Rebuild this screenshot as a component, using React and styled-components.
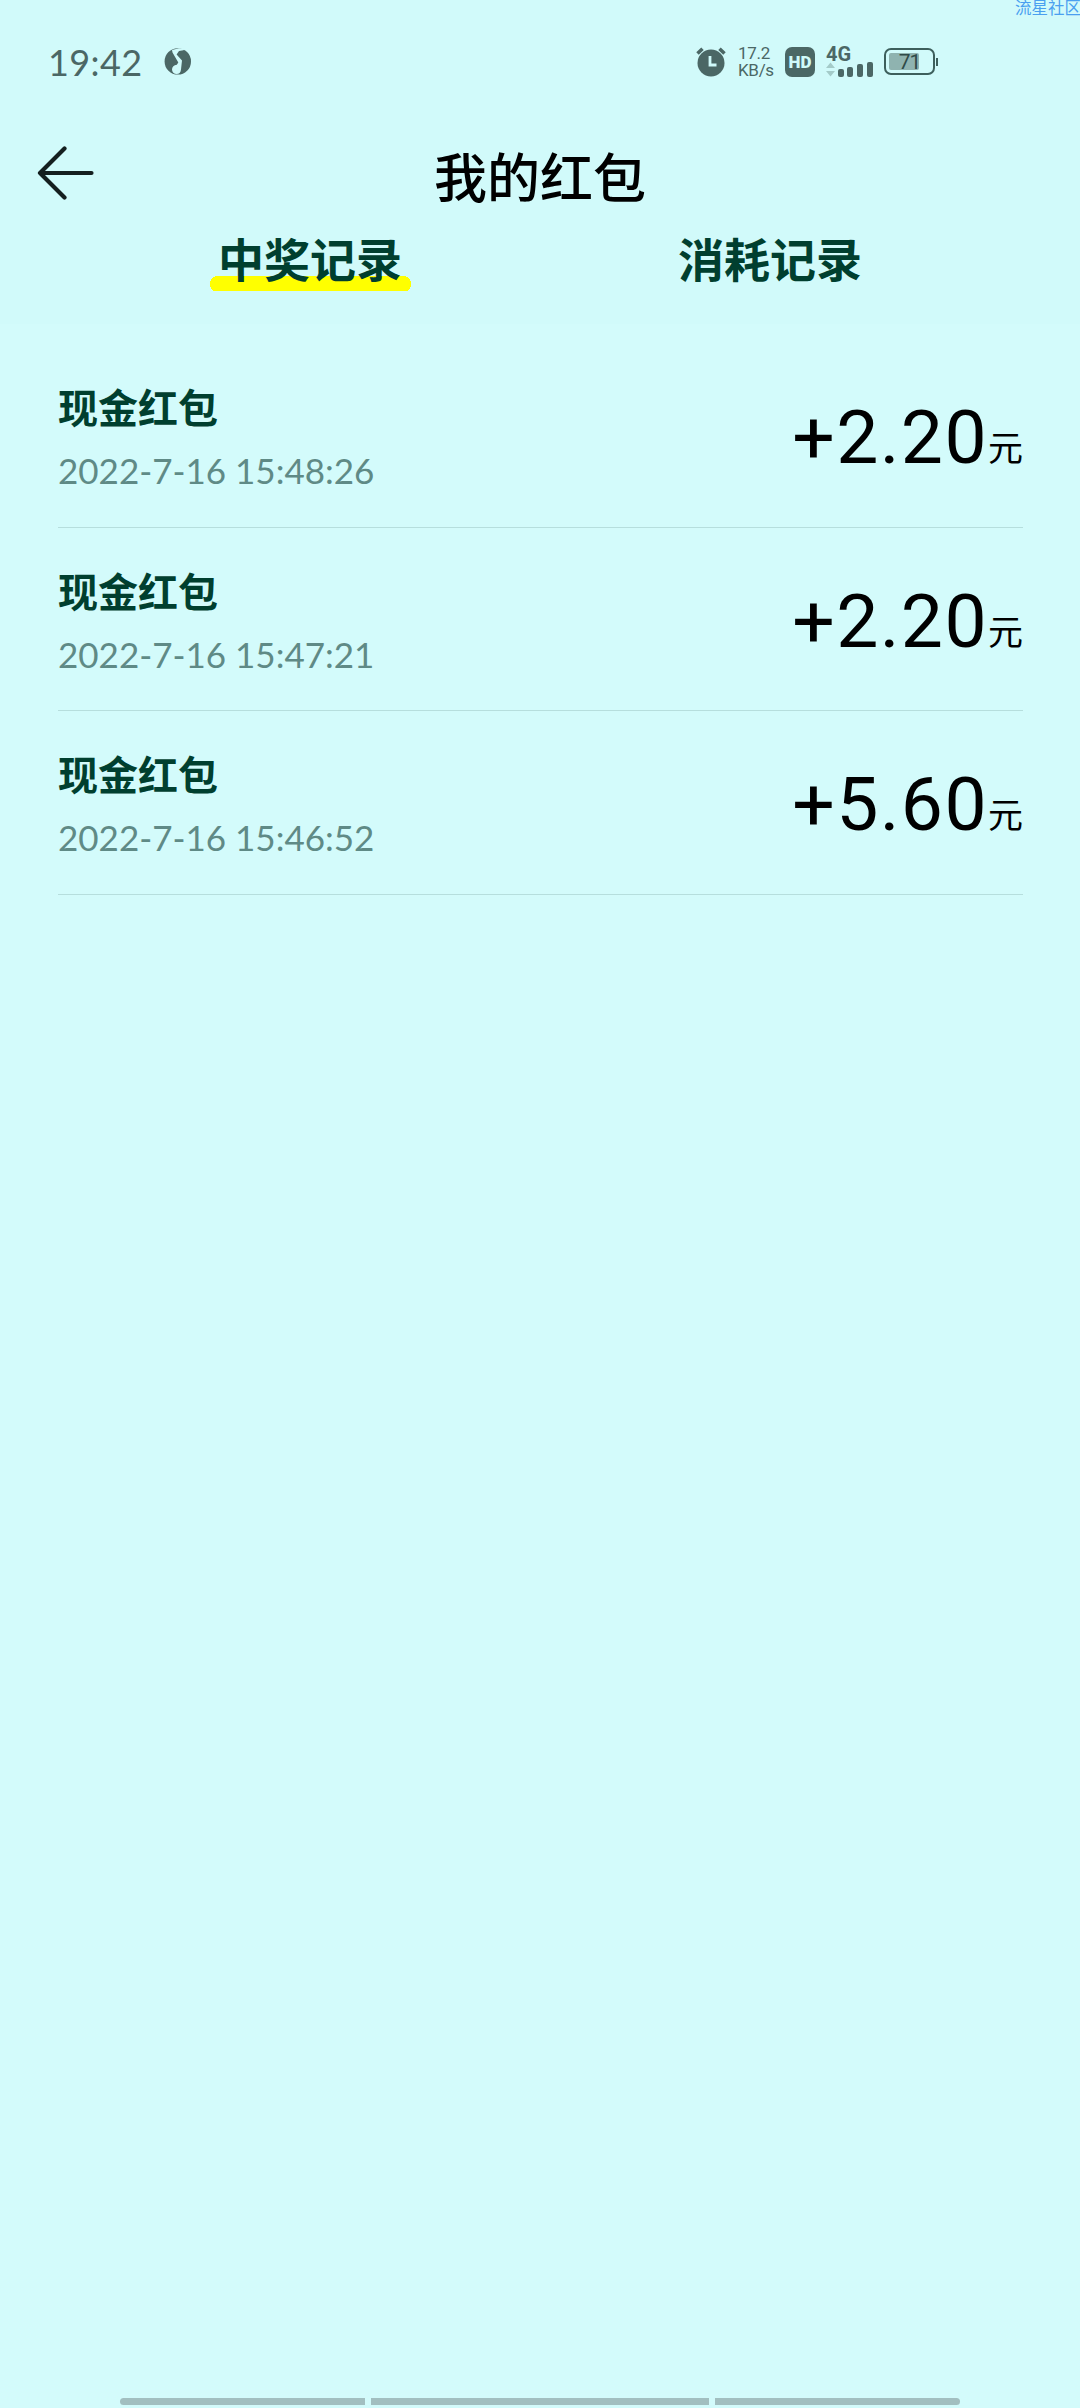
import styled, { createGlobalStyle } from 'styled-components';

const GlobalStyle = createGlobalStyle`
  * {
    box-sizing: border-box;
  }

  body {
    margin: 0;
    background: #d3fbfb;
    font-family: Lato, 'Noto Sans CJK SC', sans-serif;
  }
`;

const Screen = styled.div`
  position: relative;
  display: flex;
  flex-direction: column;
  width: 1080px;
  height: 2408px;
  overflow: hidden;
  background: #d3fbfb;
`;

const Watermark = styled.span`
  position: absolute;
  top: -3px;
  left: 1015px;
  color: #4a9ff0;
  font-size: 16.5px;
  line-height: 22px;
  white-space: nowrap;
`;

const Header = styled.header`
  height: 324px;
  background: #d1fafa;
`;

const StatusBar = styled.div`
  display: flex;
  align-items: center;
  justify-content: space-between;
  height: 123px;
  padding: 0 142px 0 48px;
  color: #4b6765;
`;

const StatusGroup = styled.div`
  display: flex;
  align-items: center;
`;

const Clock = styled.span`
  width: 116px;
  font-size: 36px;
  line-height: 44px;
  letter-spacing: 0.4px;
`;

const Speed = styled.div`
  display: flex;
  flex-direction: column;
  width: 47px;
  margin-left: 12px;
  font-family: Roboto, sans-serif;
  font-size: 17px;
  line-height: 17px;
  letter-spacing: -0.3px;
`;

const HdBadge = styled.span`
  display: flex;
  align-items: center;
  justify-content: center;
  width: 30px;
  height: 30px;
  border-radius: 7px;
  background: #4b6765;
  color: #d0fafa;
  font-family: Roboto, sans-serif;
  font-size: 17px;
  font-weight: 900;
`;

const Network = styled.div`
  display: flex;
  flex-direction: column;
  width: 48px;
  height: 30px;
  margin-left: 11px;
`;

const NetworkType = styled.span`
  font-family: Roboto, sans-serif;
  font-size: 20px;
  font-weight: 700;
  line-height: 15px;
`;

const Battery = styled.div`
  display: flex;
  align-items: center;
  margin-left: 10px;
`;

const BatteryBody = styled.div`
  width: 51px;
  height: 27px;
  padding: 3px;
  border: 2px solid #3d5f5c;
  border-radius: 7px;
`;

const BatteryLevel = styled.div`
  display: flex;
  align-items: center;
  justify-content: center;
  width: 30px;
  height: 17px;
  padding-left: 11px;
  border-radius: 2px;
  background: #8fb3b0;
  color: #2f4a48;
  font-family: Roboto, sans-serif;
  font-size: 21px;
  letter-spacing: -1px;
`;

const BatteryTip = styled.div`
  width: 2px;
  height: 8px;
  margin-left: 1px;
  background: #3d5f5c;
`;

const TitleBar = styled.div`
  display: grid;
  grid-template-columns: 120px 1fr 120px;
  align-items: center;
  height: 103px;
`;

const BackButton = styled.button`
  display: flex;
  width: 120px;
  padding: 0 0 3px 36px;
  border: 0;
  background: none;
`;

const Title = styled.h1`
  margin: 0;
  padding-top: 6px;
  color: #000;
  font-size: 53px;
  font-weight: 500;
  line-height: 76px;
  text-align: center;
`;

const Tabs = styled.nav`
  display: grid;
  grid-template-columns: 460px 460px;
  justify-content: center;
`;

const Tab = styled.a`
  justify-self: center;
  height: 65px;
  padding: 0 8.5px;
  background: ${({ $active }) =>
    $active
      ? 'radial-gradient(circle at 8px 8px, #ff0 8px, transparent 8px) 0 50px / 16px 16px no-repeat, radial-gradient(circle at 8px 8px, #ff0 8px, transparent 8px) 100% 50px / 16px 16px no-repeat, linear-gradient(#ff0, #ff0) 50% 50px / calc(100% - 16px) 16px no-repeat'
      : 'none'};
  color: #003f2f;
  font-size: 46px;
  font-weight: 700;
  line-height: 68px;
`;

const List = styled.ul`
  margin: 0;
  padding: 20px 57px 0 58px;
  list-style: none;
`;

const Row = styled.li`
  display: flex;
  justify-content: space-between;
  height: 183.5px;
  border-bottom: 1px solid #b6dedd;
`;

const Info = styled.div`
  display: flex;
  flex-direction: column;
  padding-top: 34px;
`;

const Name = styled.strong`
  color: #003f2f;
  font-size: 40px;
  font-weight: 700;
  line-height: 60px;
`;

const Time = styled.time`
  margin-top: 11px;
  color: #5f8a86;
  font-size: 35px;
  line-height: 42px;
`;

const Amount = styled.div`
  display: flex;
  align-items: baseline;
  height: 90px;
  margin-top: 48px;
  color: #000;
  font-family: Roboto, 'Noto Sans CJK SC', sans-serif;
  font-size: 75px;
  line-height: 90px;
  letter-spacing: 1.4px;
`;

const Unit = styled.span`
  padding-bottom: 2px;
  font-family: 'Noto Sans CJK SC', sans-serif;
  font-size: 35px;
  line-height: 40px;
  letter-spacing: 0;
  transform: translateY(-2px);
`;

const HomeBar = styled.div`
  display: flex;
  gap: 6px;
  width: 840px;
  height: 7px;
  margin: auto auto 3px;
`;

const Segment = styled.span`
  flex: ${({ $width }) => $width} 0 0;
  border-radius: ${({ $radius }) => $radius || 0};
  background: #a2bfc0;
`;

const AppIcon = () => (
  <svg width="28" height="28" viewBox="0 0 28 28">
    <circle cx="13.8" cy="13.4" r="13.2" fill="#4b6765" />
    <path
      d="M8 2L15 0.3L21 0.5L19.5 2.2L15 3L12.6 6.5L18 12.5L17 21.5C16.8 24.5 15 26 12.7 26C10 26 8 24 8 21.5C8 19 10 17 12.8 16.8L14.3 14.5L8.5 4.5Z"
      fill="#d0fafa"
    />
  </svg>
);

const AlarmIcon = () => (
  <svg width="30" height="30" viewBox="0 0 30 30">
    <circle cx="15" cy="16" r="13.5" fill="#4b6765" />
    <path d="M1.5 6.5L6.5 1.8M28.5 6.5L23.5 1.8" stroke="#4b6765" strokeWidth="3.6" />
    <path d="M14 9V18H20.5" fill="none" stroke="#d0fafa" strokeWidth="2.8" />
  </svg>
);

const SignalIcon = () => (
  <svg width="48" height="15" viewBox="0 0 48 15">
    <path d="M0 6L4.5 0.5L9 6ZM0 9L4.5 14.5L9 9Z" fill="#a4cbc9" />
    <rect x="12" y="7" width="6" height="8" rx="2" fill="#4b6765" />
    <rect x="21" y="5" width="6" height="10" rx="2" fill="#4b6765" />
    <rect x="31" y="2" width="6" height="13" rx="2" fill="#4b6765" />
    <rect x="41" y="0" width="6" height="15" rx="2" fill="#4b6765" />
  </svg>
);

const BackIcon = () => (
  <svg width="58" height="54" viewBox="0 0 58 54" fill="none" stroke="#141f1f" strokeWidth="4.2" strokeLinecap="round" strokeLinejoin="round">
    <path d="M28.5 2.5L4 27L28.5 51.5M4 27H55.5" />
  </svg>
);

const records = [
  { name: '现金红包', time: '2022-7-16 15:48:26', amount: '+2.20' },
  { name: '现金红包', time: '2022-7-16 15:47:21', amount: '+2.20' },
  { name: '现金红包', time: '2022-7-16 15:46:52', amount: '+5.60' },
];

const App = () => {
  return (
    <>
      <GlobalStyle />
      <Screen>
        <Watermark>流星社区</Watermark>
        <Header>
          <StatusBar>
            <StatusGroup>
              <Clock>19:42</Clock>
              <AppIcon />
            </StatusGroup>
            <StatusGroup>
              <AlarmIcon />
              <Speed>
                <span>17.2</span>
                <span>KB/s</span>
              </Speed>
              <HdBadge>HD</HdBadge>
              <Network>
                <NetworkType>4G</NetworkType>
                <SignalIcon />
              </Network>
              <Battery>
                <BatteryBody>
                  <BatteryLevel>71</BatteryLevel>
                </BatteryBody>
                <BatteryTip />
              </Battery>
            </StatusGroup>
          </StatusBar>
          <TitleBar>
            <BackButton aria-label="返回">
              <BackIcon />
            </BackButton>
            <Title>我的红包</Title>
          </TitleBar>
          <Tabs>
            <Tab $active>中奖记录</Tab>
            <Tab>消耗记录</Tab>
          </Tabs>
        </Header>
        <List>
          {records.map(({ name, time, amount }) => (
            <Row key={time}>
              <Info>
                <Name>{name}</Name>
                <Time>{time}</Time>
              </Info>
              <Amount>
                {amount}
                <Unit>元</Unit>
              </Amount>
            </Row>
          ))}
        </List>
        <HomeBar>
          <Segment $width={245} $radius="4px 0 0 4px" />
          <Segment $width={338} />
          <Segment $width={245} $radius="0 4px 4px 0" />
        </HomeBar>
      </Screen>
    </>
  );
};

export default App;
